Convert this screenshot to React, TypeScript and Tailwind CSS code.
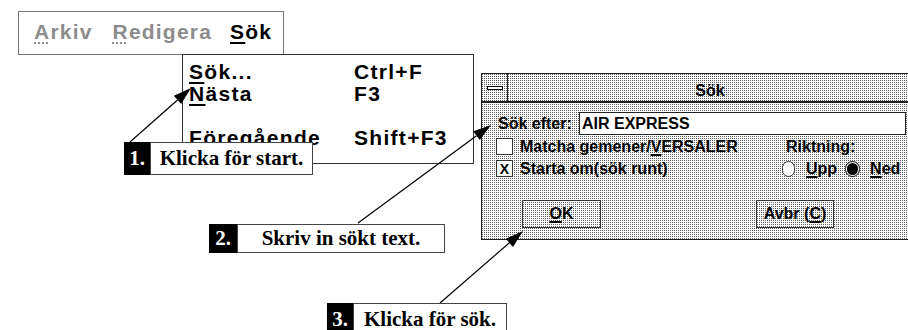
import React from "react";

const dither =
  "bg-[#5a5a5a] bg-[image:repeating-linear-gradient(90deg,transparent_0_1px,#ffffff_1px_2px),repeating-linear-gradient(0deg,transparent_0_1px,#ffffff_1px_2px)]";

function U({ children }: { children: React.ReactNode }) {
  return <span className="underline decoration-[1.5px] underline-offset-[2px]">{children}</span>;
}

function Arrow({ x1, y1, x2, y2 }: { x1: number; y1: number; x2: number; y2: number }) {
  const dx = x2 - x1;
  const dy = y2 - y1;
  const L = Math.hypot(dx, dy);
  const ux = dx / L;
  const uy = dy / L;
  const hl = 18;
  const hw = 5.5;
  const bx = x2 - ux * hl;
  const by = y2 - uy * hl;
  const px = -uy;
  const py = ux;
  const pts = `${x2},${y2} ${bx + px * hw},${by + py * hw} ${bx - px * hw},${by - py * hw}`;
  return (
    <g>
      <line x1={x1} y1={y1} x2={bx} y2={by} stroke="#000" strokeWidth={1.2} />
      <polygon points={pts} fill="#000" />
    </g>
  );
}

function Callout({
  n,
  text,
  className,
  numW,
  whiteW,
}: {
  n: string;
  text: string;
  className: string;
  numW: string;
  whiteW: string;
}) {
  return (
    <div className={`absolute flex font-['Liberation_Serif','Times_New_Roman',serif] font-bold text-[21px] leading-[23px] ${className}`}>
      <div className={`flex items-center justify-center bg-black text-white ${numW}`}>{n}</div>
      <div className={`flex items-center justify-center bg-white text-black border border-[#444] ${whiteW}`}>{text}</div>
    </div>
  );
}

export default function App() {
  return (
    <div className="relative w-[908px] h-[330px] overflow-hidden bg-white text-black font-['Liberation_Sans',Arial,sans-serif]">
      {/* Menu bar */}
      <div className="absolute left-[18px] top-[11px] w-[266px] h-[44px] border border-[#777] bg-white">
        <div className="flex pl-[15px] pt-[8px] text-[21px] leading-[23px] font-bold tracking-[1.2px]">
          <span className="text-[#8c8c8c]">
            <span className="underline decoration-dotted decoration-[1.5px] underline-offset-[3px]">A</span>rkiv
          </span>
          <span className="ml-[20px] text-[#8c8c8c]">
            <span className="underline decoration-dotted decoration-[1.5px] underline-offset-[3px]">R</span>edigera
          </span>
          <span className="ml-[18px]">
            <span className="underline decoration-2 underline-offset-[3px]">S</span>ök
          </span>
        </div>
      </div>

      {/* Dropdown menu */}
      <div className="absolute left-[182px] top-[54px] w-[292px] h-[110px] border border-[#333] bg-white">
        <div className="grid grid-cols-[165px_1fr] pl-[6px] pt-[6px] text-[21px] leading-[22px] font-bold tracking-[1.3px]">
          <div>
            <span className="underline decoration-2 underline-offset-[3px]">S</span>ök...
          </div>
          <div>Ctrl+F</div>
          <div>
            <span className="underline decoration-2 underline-offset-[3px]">N</span>ästa
          </div>
          <div>F3</div>
          <div className="mt-[22px]">Föregående</div>
          <div className="mt-[22px]">Shift+F3</div>
        </div>
      </div>

      {/* Dialog */}
      <div className={`absolute left-[481px] top-[73px] w-[432px] border border-[#222] ${dither}`}>
        <div className="flex h-[29px] border-b-2 border-[#222]">
          <div className="flex w-[26px] items-center justify-center border-r border-[#222]">
            <div className="h-[4px] w-[16px] border border-black bg-white" />
          </div>
          <div className="flex-1 pt-[8px] text-center text-[16px] leading-[18px] font-bold">Sök</div>
        </div>
        <div className="pb-[11px] text-[16px] leading-[18px] font-bold">
          <div className="mt-[9px] flex items-center">
            <span className="w-[97px] pl-[16px]">Sök efter:</span>
            <div className="flex h-[23px] w-[327px] items-center border border-[#222] bg-white pl-[2px]">
              AIR EXPRESS
            </div>
          </div>
          <div className="mt-[3px] flex h-[17px] items-center pl-[14px]">
            <div className="flex w-[290px] items-center">
              <div className="h-[17px] w-[17px] border border-[#333] bg-white" />
              <span className="ml-[7px]">
                Matcha gemener/<U>V</U>ERSALER
              </span>
            </div>
            <span>Riktning:</span>
          </div>
          <div className="mt-[5px] flex h-[17px] items-center pl-[14px]">
            <div className="flex w-[286px] items-center">
              <div className="flex h-[17px] w-[17px] items-center justify-center border border-[#333] bg-white text-[14px] leading-none">
                X
              </div>
              <span className="ml-[7px]">Starta om(sök runt)</span>
            </div>
            <div className="h-[16px] w-[13px] rounded-full border border-[#333] bg-white" />
            <span className="ml-[11px]">
              <U>U</U>pp
            </span>
            <div className="ml-[8px] flex h-[16px] w-[15px] items-center justify-center rounded-full border border-black bg-white">
              <div className="h-[12px] w-[11px] rounded-full bg-black" />
            </div>
            <span className="ml-[10px]">
              <U>N</U>ed
            </span>
          </div>
          <div className="mt-[23px] flex pl-[40px]">
            <div className={`flex h-[28px] w-[79px] items-center justify-center border border-[#333] ${dither}`}>
              <U>O</U>K
            </div>
            <div className={`ml-[155px] flex h-[28px] w-[78px] items-center justify-center border border-[#333] ${dither}`}>
              <span>
                Avbr (<U>C</U>)
              </span>
            </div>
          </div>
        </div>
      </div>

      {/* Arrows */}
      <svg className="pointer-events-none absolute left-0 top-0" width={908} height={330}>
        <Arrow x1={130} y1={142} x2={191} y2={88} />
        <Arrow x1={358} y1={223} x2={491} y2={125} />
        <Arrow x1={440} y1={303} x2={523} y2={231} />
      </svg>

      {/* Callouts */}
      <Callout n="1." text="Klicka för start." className="left-[124px] top-[142px] h-[33px]" numW="w-[26px]" whiteW="w-[163px]" />
      <Callout n="2." text="Skriv in sökt text." className="left-[209px] top-[224px] h-[29px]" numW="w-[28px]" whiteW="w-[208px]" />
      <Callout n="3." text="Klicka för sök." className="left-[327px] top-[303px] h-[32px]" numW="w-[26px]" whiteW="w-[154px]" />
    </div>
  );
}
